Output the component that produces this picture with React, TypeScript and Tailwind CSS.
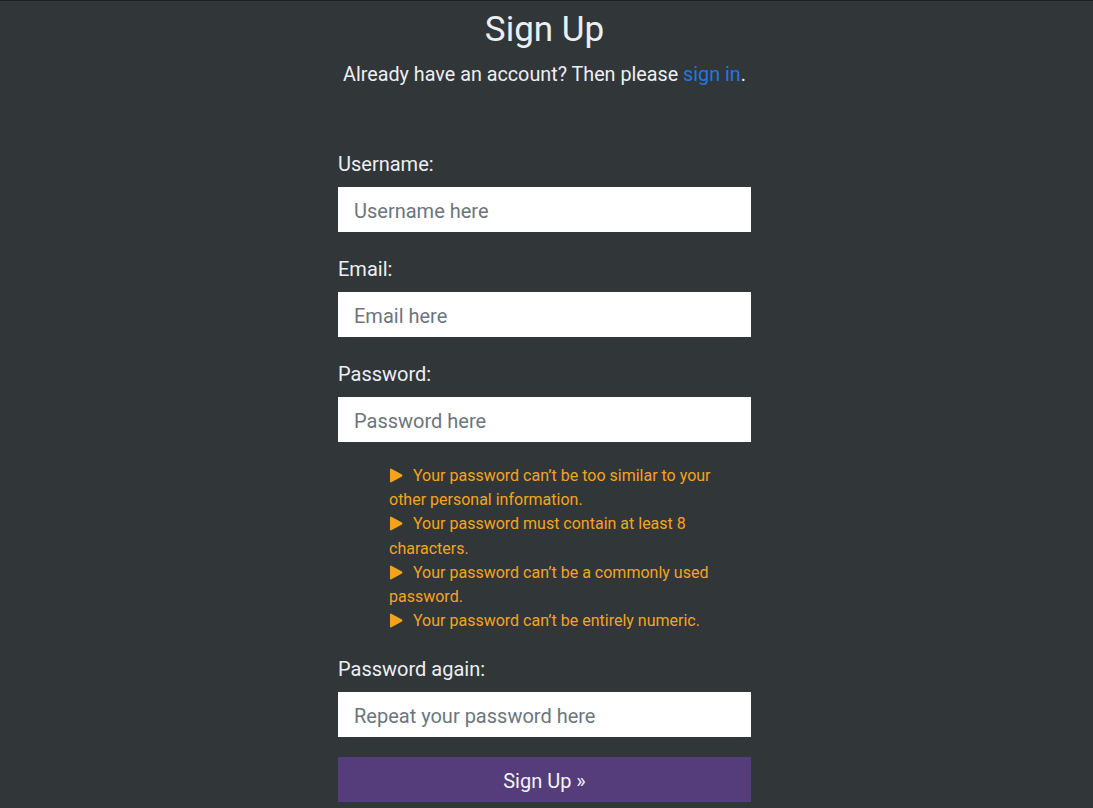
import React from "react";

const rules = [
  "Your password can’t be too similar to your other personal information.",
  "Your password must contain at least 8 characters.",
  "Your password can’t be a commonly used password.",
  "Your password can’t be entirely numeric.",
];

const Field = ({ label, placeholder, type = "text" }: { label: string; placeholder: string; type?: string }) => (
  <div className="flex flex-col">
    <label className="text-[20px] leading-[30px] text-[#eceff1]">{label}</label>
    <input
      type={type}
      placeholder={placeholder}
      className="mt-[8px] h-[45px] w-full bg-white pl-[16px] pt-[2px] text-[20px] text-[#495057] outline-none placeholder:text-[#6c757d]"
    />
  </div>
);

const Arrow = () => (
  <svg width="14" height="15" viewBox="0 0 14 15" className="mr-[10px] inline-block align-[-2px]">
    <path d="M1 1.4 Q1 0 2.3 0.7 L13 6.6 Q14 7.5 13 8.4 L2.3 14.3 Q1 15 1 13.6 Z" fill="#f4a21c" />
  </svg>
);

export default function App() {
  return (
    <div className="min-h-screen border-t border-[#1b1f22] bg-[#313639] font-['Roboto',sans-serif]">
      <div className="flex justify-center pr-[4px]">
        <div className="flex w-[413px] flex-col">
          <h1 className="mt-[8px] text-center text-[35px] leading-[42px] text-[#eceff1]">Sign Up</h1>
          <p className="mt-[9px] whitespace-nowrap text-center text-[19.75px] leading-[30px] text-[#eceff1]">
            Already have an account? Then please <a className="text-[#1f7ae0]">sign in</a>.
          </p>

          <form className="mt-[59px] flex flex-col">
            <Field label="Username:" placeholder="Username here" />
            <div className="mt-[22px]">
              <Field label="Email:" placeholder="Email here" type="email" />
            </div>
            <div className="mt-[22px]">
              <Field label="Password:" placeholder="Password here" type="password" />
            </div>

            <ul className="mt-[22px] pl-[51px] pr-[6px] text-[16px] leading-[24.2px] text-[#f4a420]">
              {rules.map((r) => (
                <li key={r}>
                  <Arrow />
                  {r}
                </li>
              ))}
            </ul>

            <div className="mt-[21px]">
              <Field label="Password again:" placeholder="Repeat your password here" type="password" />
            </div>

            <button
              type="button"
              className="mt-[20px] h-[45px] w-full bg-[#553c7b] pt-[2px] text-[20px] text-[#f4f4f6]"
            >
              Sign Up »
            </button>
          </form>
        </div>
      </div>
    </div>
  );
}
